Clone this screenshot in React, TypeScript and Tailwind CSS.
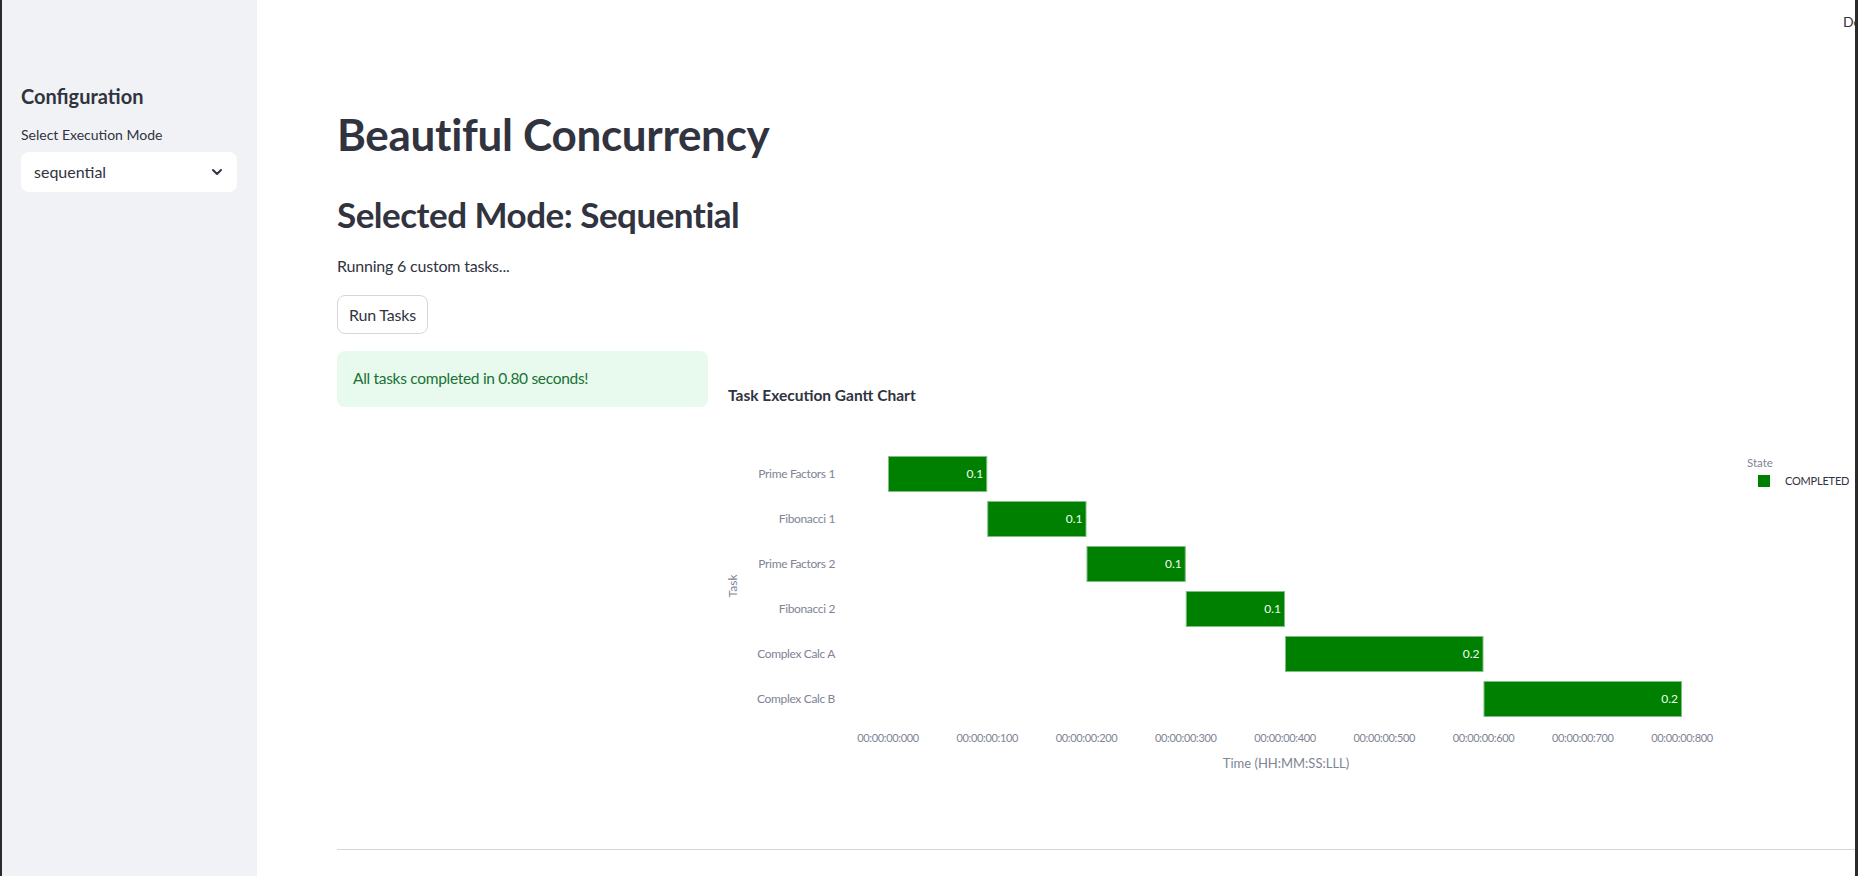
import React from "react";
import { ChevronDown } from "lucide-react";

const tasks = [
  { name: "Prime Factors 1", start: 0, dur: 0.1 },
  { name: "Fibonacci 1", start: 0.1, dur: 0.1 },
  { name: "Prime Factors 2", start: 0.2, dur: 0.1 },
  { name: "Fibonacci 2", start: 0.3, dur: 0.1 },
  { name: "Complex Calc A", start: 0.4, dur: 0.2 },
  { name: "Complex Calc B", start: 0.6, dur: 0.2 },
];

const FONT = "Lato, 'Open Sans', sans-serif";

function Gantt() {
  const x0 = 164;
  const pxPerSec = 992.5;
  const rowY = (i: number) => 123 + i * 45;
  const ticks = [0, 1, 2, 3, 4, 5, 6, 7, 8];
  return (
    <svg width="1131" height="460" viewBox="0 0 1131 460" style={{ fontFamily: FONT }}>
      <text x="4" y="50" fontSize="15.5" fontWeight="700" fill="#31333f">
        Task Execution Gantt Chart
      </text>
      <text
        x="0"
        y="0"
        fontSize="12"
        fill="#808495"
        textAnchor="middle"
        transform="translate(13 235) rotate(-90)"
      >
        Task
      </text>
      {tasks.map((t, i) => {
        const y = rowY(i);
        const bx = x0 + t.start * pxPerSec;
        const bw = t.dur * pxPerSec;
        return (
          <g key={t.name}>
            <text x="111" y={y + 4} fontSize="12" letterSpacing="-0.35" fill="#808495" textAnchor="end">
              {t.name}
            </text>
            <rect x={bx + 0.5} y={y - 18 + 0.5} width={bw - 1} height={35} fill="#008000" stroke="#7fbf7f" strokeWidth="1" />
            <text x={bx + bw - 4} y={y + 4} fontSize="12" fill="#f0fff0" textAnchor="end">
              {t.dur.toFixed(1)}
            </text>
          </g>
        );
      })}
      {ticks.map((k) => (
        <text key={k} x={x0 + k * 99.25} y={391} fontSize="11" letterSpacing="-0.35" fill="#808495" textAnchor="middle">
          {`00:00:00:${String(k * 100).padStart(3, "0")}`}
        </text>
      ))}
      <text x="562" y="417" fontSize="13" fill="#808495" textAnchor="middle">
        Time (HH:MM:SS:LLL)
      </text>
      <text x="1023" y="116" fontSize="11.5" fill="#808495">
        State
      </text>
      <rect x="1034" y="124" width="12" height="12" fill="#008000" />
      <text x="1061" y="134" fontSize="11" letterSpacing="-0.2" fill="#31333f">
        COMPLETED
      </text>
    </svg>
  );
}

export default function App() {
  return (
    <div
      className="relative flex w-[1858px] h-[876px] overflow-hidden bg-white border-l-2 border-r-[3px] border-[#2b2b2b] text-[#31333f]"
      style={{ fontFamily: FONT }}
    >
      <aside className="w-[255px] shrink-0 h-full bg-[#f0f2f6] pl-[19px] pr-[18px] pt-[84px]">
        <h2 className="text-[20px] leading-[24px] font-bold">Configuration</h2>
        <div className="mt-[17px] text-[14px] leading-[20px]">Select Execution Mode</div>
        <div className="mt-[7px] h-[40px] w-[216px] rounded-lg bg-white flex items-center justify-between pl-[13px] pr-[12px]">
          <span className="text-[16px]">sequential</span>
          <ChevronDown size={16} strokeWidth={3} className="text-[#31333f]" />
        </div>
      </aside>
      <main className="flex-1 pl-[80px] pt-[108px] flex flex-col">
        <h1 className="text-[44px] leading-[53px] font-bold tracking-[-0.3px]">Beautiful Concurrency</h1>
        <h2 className="mt-[32px] text-[35px] leading-[43px] font-bold tracking-[-0.5px]">Selected Mode: Sequential</h2>
        <p className="mt-[18px] text-[16px] leading-[24px] tracking-[-0.2px]">Running 6 custom tasks...</p>
        <div className="mt-[17px]">
          <button className="h-[39px] px-[11px] rounded-lg border border-[#d6d6d9] bg-white text-[16px] tracking-[-0.2px]">
            Run Tasks
          </button>
        </div>
        <div className="mt-[17px] flex gap-4">
          <div className="w-[371px] shrink-0">
            <div className="h-[56px] rounded-lg bg-[#e8f9ee] text-[#177233] text-[15.5px] tracking-[-0.3px] flex items-center pl-[16px]">
              All tasks completed in 0.80 seconds!
            </div>
          </div>
          <div className="flex-1">
            <Gantt />
          </div>
        </div>
        <div className="mt-[38px] h-px bg-[#d6d6d9]" />
      </main>
      <div className="absolute top-[11px] left-[1841px] text-[14px] whitespace-nowrap">Deploy</div>
    </div>
  );
}
